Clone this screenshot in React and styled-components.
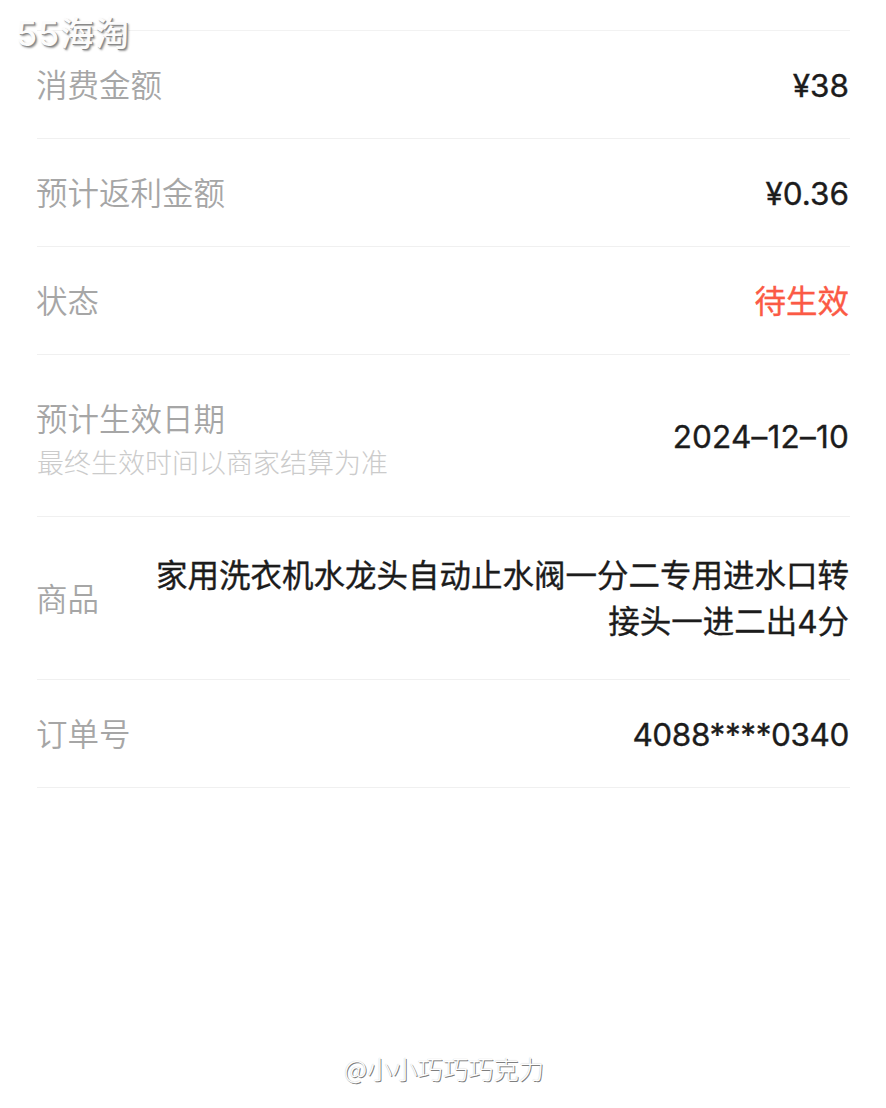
import React from "react";
import styled, { createGlobalStyle } from "styled-components";

const Global = createGlobalStyle`
  html, body { margin: 0; padding: 0; background: #fff; }
  body { font-family: "Inter", "Noto Sans CJK SC", sans-serif; }
`;
const Page = styled.div`
  position: relative;
  width: 886px;
  height: 1108px;
  overflow: hidden;
  background: #fff;
  padding: 30px 36px 0 37px;
  box-sizing: border-box;
`;
const List = styled.div`
  border-top: 1px solid #f2f2f2;
`;
const Row = styled.div`
  display: flex;
  align-items: center;
  justify-content: space-between;
  gap: 56px;
  height: ${(p) => p.$h}px;
  box-sizing: border-box;
  border-bottom: 1px solid #f0f0f0;
  padding-right: 1px;
`;
const LabelBox = styled.div`
  display: flex;
  flex-direction: column;
  gap: 10px;
  flex: none;
  margin-top: ${(p) => (p.$hasSub ? 5 : -2)}px;
`;
const Label = styled.div`
  font-size: 31.5px;
  line-height: 37px;
  color: #a6a6a6;
  font-family: "Noto Sans CJK SC", sans-serif;
  font-weight: 350;
  margin-left: -1px;
`;
const Sub = styled.div`
  font-size: 27px;
  line-height: 32px;
  color: #cbcbcb;
  font-family: "Noto Sans CJK SC", sans-serif;
  font-weight: 300;
`;
const Value = styled.div`
  font-size: 31.5px;
  line-height: 46px;
  letter-spacing: ${(p) => p.$tracking || 0}px;
  color: ${(p) => (p.$accent ? "#fb5a45" : "#1c1c1c")};
  text-align: right;
  font-family: "Inter", "Noto Sans CJK SC", sans-serif;
  font-weight: 400;
  -webkit-text-stroke: 0.35px currentColor;
  margin-top: 2px;
`;
const Mark = styled.div`
  position: absolute;
  left: 16px;
  top: 15px;
  font-family: "Inter", "Noto Sans CJK SC", sans-serif;
  font-size: 34px;
  line-height: 38px;
  font-weight: 500;
  letter-spacing: 1px;
  color: #fcfcfc;
  text-shadow: 1px 1px 0 #8a8a8a, 2px 2px 2px #9c9c9c;
`;
const Credit = styled.div`
  position: absolute;
  left: 344px;
  top: 1051px;
  font-family: "Noto Sans CJK SC", sans-serif;
  font-size: 25.3px;
  line-height: 34px;
  font-weight: 300;
  color: #fff;
  text-shadow: 1px 1px 0 #7f7f7f, 0 0 1px #b8b8b8;
`;

const rows = [
  { h: 108, label: "消费金额", value: "¥38" },
  { h: 108, label: "预计返利金额", value: "¥0.36" },
  { h: 108, label: "状态", value: "待生效", accent: true },
  { h: 162, label: "预计生效日期", sub: "最终生效时间以商家结算为准", value: "2024–12–10", tracking: 0.2 },
  { h: 163, label: "商品", value: "家用洗衣机水龙头自动止水阀一分二专用进水口转接头一进二出4分" },
  { h: 108, label: "订单号", value: "4088****0340", tracking: -0.4 },
];

export default function App() {
  return (
    <Page>
      <Global />
      <List>
        {rows.map((r) => (
          <Row key={r.label} $h={r.h}>
            <LabelBox $hasSub={!!r.sub}>
              <Label>{r.label}</Label>
              {r.sub && <Sub>{r.sub}</Sub>}
            </LabelBox>
            <Value $accent={r.accent} $tracking={r.tracking}>{r.value}</Value>
          </Row>
        ))}
      </List>
      <Mark>55海淘</Mark>
      <Credit>@小小巧巧巧克力</Credit>
    </Page>
  );
}
